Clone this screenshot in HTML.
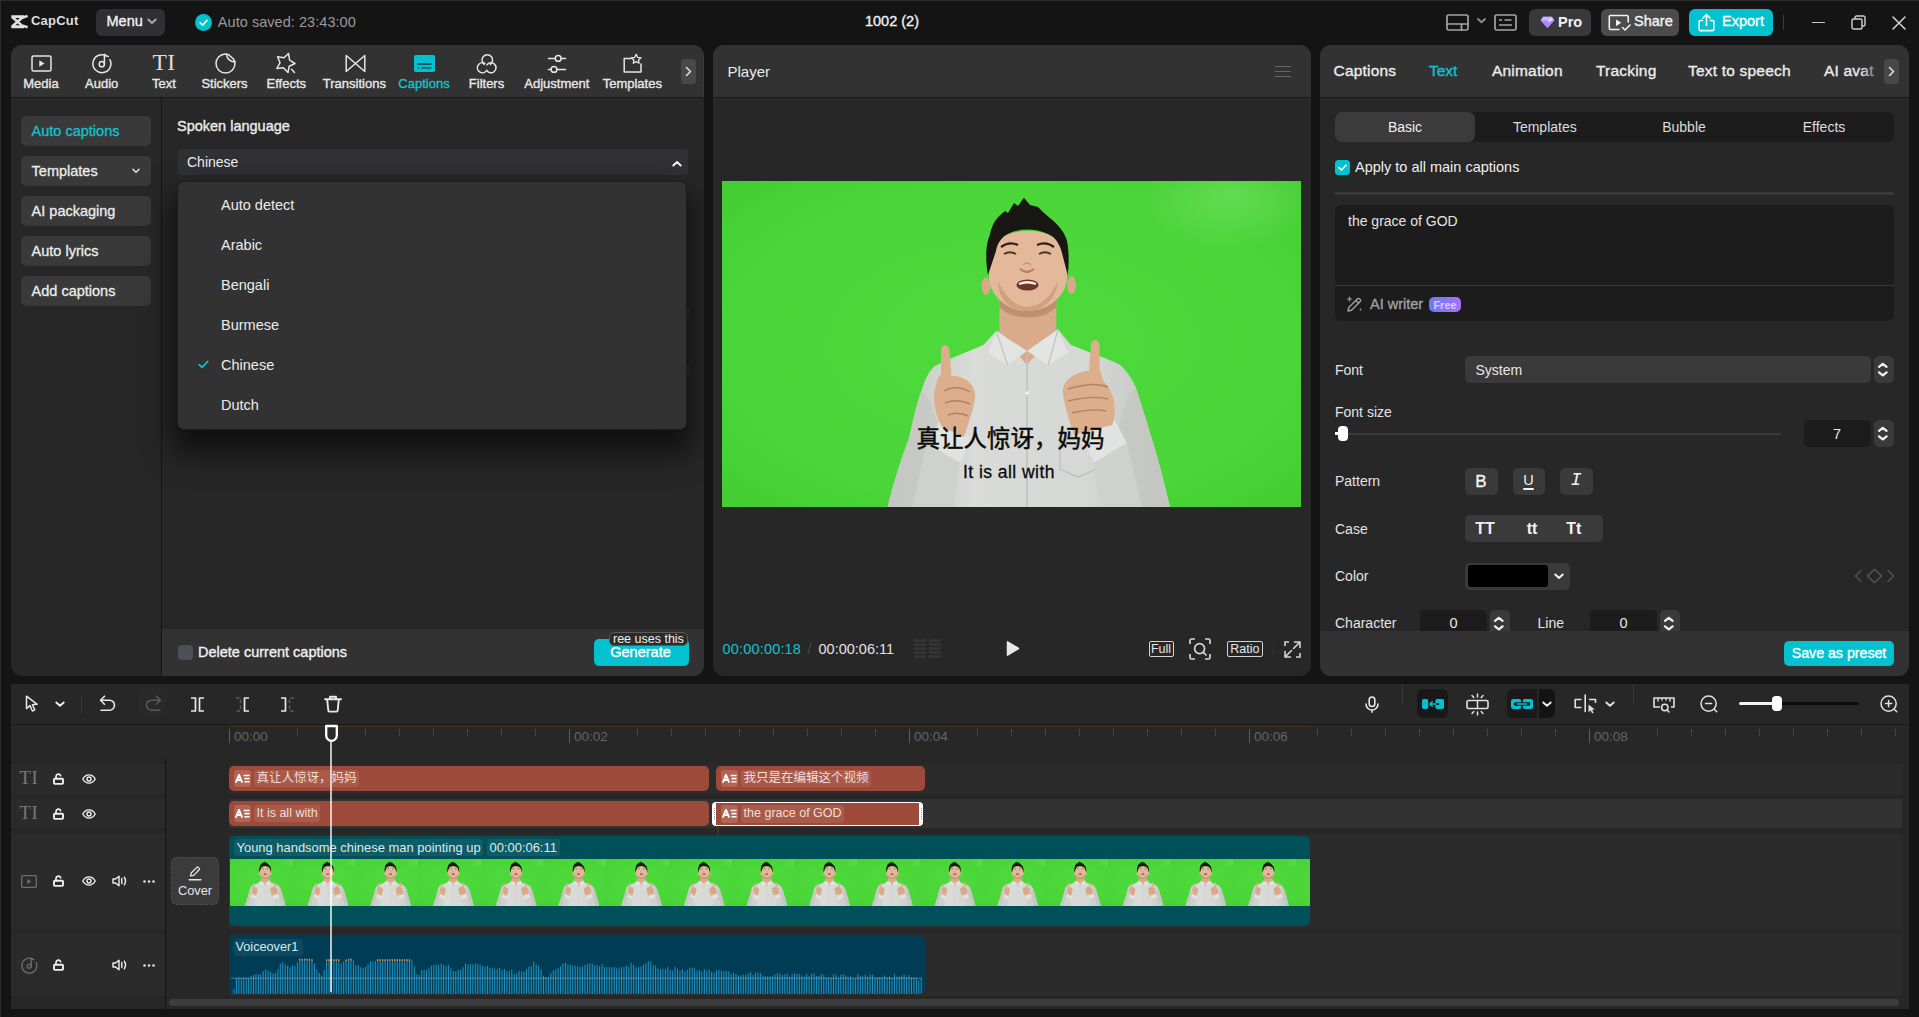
<!DOCTYPE html>
<html lang="en">
<head>
<meta charset="utf-8">
<title>CapCut</title>
<style>
*{box-sizing:border-box;margin:0;padding:0}
html,body{width:1919px;height:1017px;overflow:hidden;background:#141414}
body{position:relative;font-family:"Liberation Sans","Noto Sans CJK SC",sans-serif;color:#f0f0f0;font-size:14px;-webkit-font-smoothing:antialiased}
.abs{position:absolute}
.panel{position:absolute;background:#272727;border-radius:11px;overflow:hidden}
.phead{position:absolute;left:0;top:0;right:0;height:53px !important;background:#323232;border-bottom:1px solid #191919}
.m{-webkit-text-stroke:0.35px currentColor}
.t{position:absolute;white-space:nowrap;line-height:1}
.c{transform:translateX(-50%)}
svg{position:absolute;overflow:visible}
svg svg{overflow:hidden}
.ic{fill:none;stroke:#e6e6e6;stroke-width:1.5;stroke-linecap:round;stroke-linejoin:round}
.cy{color:#12c2cf !important}
.btn{position:absolute;border-radius:5px}
.sidebtn{position:absolute;left:10px;width:130px;height:30px;border-radius:5px;background:#393939;font-size:14.5px;line-height:30px;padding-left:10.600px;-webkit-text-stroke:0.3px currentColor;color:#ececec}
.dd{position:absolute;left:43px;font-size:14.5px;line-height:1;color:#ececec;white-space:nowrap}
.lab{position:absolute;font-size:14px;line-height:1;color:#e4e4e4;white-space:nowrap}
.step{position:absolute;width:20px;height:27px;background:#3a3a3a;border-radius:5px}
.row{position:absolute;left:0;right:7px;background:#2a2a2a}
.clip{position:absolute;background:#9d4a3a;border-radius:5px;height:25px}
.clip .tag{position:absolute;left:5px;top:3.800px;height:17.500px;width:17px;background:#b26555;border-radius:3px}
.clip .nm{position:absolute;left:25px;top:3.800px;height:17.500px;padding:0 2.500px;background:#a85b4b;border-radius:3px;font-size:12.5px;line-height:17.500px;color:#f3ded9;white-space:nowrap}
.tk{position:absolute;width:1.5px;background:#4a4a4a;top:46px;height:6px}
.tkM{position:absolute;width:2px;background:#666;top:45px;height:14px}
.tl{position:absolute;top:46px;font-size:13px;color:#707070;line-height:1}
</style>
</head>
<body>
<!-- window frame -->
<div class="abs" style="left:0;top:0;width:1919px;height:1px;background:#2b2b2b"></div>
<div class="abs" style="left:0;top:0;width:1px;height:1017px;background:#2b2b2b"></div>

<!-- TOP BAR -->
<svg style="left:11px;top:14.700px" width="17" height="13.400" viewBox="0 0 17 13.400"><path d="M0.300 0.200H13.200V3.100H0.300ZM0.300 10.300H13V13.200H0.300Z" fill="#e2e2e2"/><path d="M1.400 2.200L10.800 10.400L16.600 12.200M1.400 11.200L10.800 3L16.600 0.900" stroke="#e2e2e2" stroke-width="2.500" fill="none" stroke-linejoin="round"/></svg>
<div class="t" style="left:31px;top:14px;font-size:13px;font-weight:bold;color:#dedede;letter-spacing:0.2px">CapCut</div>

<div class="btn" style="left:96px;top:9px;width:69px;height:27px;background:#2f2f34;border-radius:6px"></div>
<div class="t m" style="left:106.5px;top:14px;font-size:14.5px;color:#f4f4f4">Menu</div>
<svg style="left:147px;top:18px" width="10" height="7" viewBox="0 0 10 7"><path d="M1.2 1.5L5 5L8.8 1.5" fill="none" stroke="#a8a8a8" stroke-width="1.9" stroke-linecap="round" stroke-linejoin="round"/></svg>

<svg style="left:195.200px;top:14px" width="17" height="17" viewBox="0 0 16 16"><circle cx="8" cy="8" r="8" fill="#03c1ce"/><path d="M4.8 8.2L7.2 10.5L11.3 6" fill="none" stroke="#fff" stroke-width="1.5" stroke-linecap="round" stroke-linejoin="round"/></svg>
<div class="t" style="left:217.800px;top:14.800px;font-size:14.5px;letter-spacing:0.050px;color:#9a9a9a">Auto saved: 23:43:00</div>

<div class="t c m" style="left:892px;top:14px;font-size:14.5px;color:#f2f2f2">1002 (2)</div>

<!-- layout icon -->
<svg style="left:1446px;top:14px" width="23" height="17" viewBox="0 0 23 17"><rect x="1" y="1" width="21" height="15" rx="1.5" class="ic" style="stroke:#a4a4a4;stroke-width:1.7"/><path d="M1 10H22M15.5 10V16" class="ic" style="stroke:#a4a4a4;stroke-width:1.7"/></svg>
<svg style="left:1477px;top:18px" width="9" height="6" viewBox="0 0 9 6"><path d="M1 1L4.5 4.2L8 1" fill="none" stroke="#8e8e8e" stroke-width="1.9" stroke-linecap="round" stroke-linejoin="round"/></svg>
<svg style="left:1494px;top:14px" width="23" height="17" viewBox="0 0 23 17"><rect x="1" y="1" width="21" height="15" rx="1.5" class="ic" style="stroke:#a4a4a4;stroke-width:1.7"/><path d="M5 6H8M10.5 6H17.5M5 11H18" class="ic" style="stroke:#a4a4a4;stroke-width:1.7;stroke-linecap:butt"/></svg>

<!-- Pro -->
<div class="btn" style="left:1529px;top:9px;width:62px;height:27px;background:#39393b;border-radius:6px"></div>
<svg style="left:1540px;top:16px" width="15" height="13" viewBox="0 0 15 13"><path d="M3.2 0.8H11.8L14.4 4.4L7.5 12.2L0.6 4.4Z" fill="#a98bff"/><path d="M3.2 0.8H11.8L14.4 4.4H0.6Z" fill="#c9b6ff"/><path d="M9 5.2L11.5 3.2" stroke="#fff" stroke-width="1.4" stroke-linecap="round"/></svg>
<div class="t" style="left:1558px;top:14.5px;font-size:14.5px;font-weight:bold;color:#f4f4f4">Pro</div>

<!-- Share -->
<div class="btn" style="left:1601px;top:9px;width:78px;height:27px;background:#4b4b4b;border-radius:6px"></div>
<svg style="left:1608px;top:14px" width="24" height="18" viewBox="0 0 24 18"><path d="M11 15.5H2.5a1.2 1.2 0 0 1-1.2-1.2V2.7a1.2 1.2 0 0 1 1.2-1.2h16.5a1.2 1.2 0 0 1 1.2 1.2V8" class="ic" style="stroke:#f2f2f2;stroke-width:1.6"/><path d="M8.500 6.200V11.400L12.500 8.800Z" fill="#f2f2f2" stroke="#f2f2f2" stroke-width="1" stroke-linejoin="round"/><path d="M14.5 13.5L17 16L22 11" class="ic" style="stroke:#f2f2f2;stroke-width:1.6"/></svg>
<div class="t m" style="left:1634px;top:14px;font-size:14.5px;color:#f4f4f4">Share</div>

<!-- Export -->
<div class="btn" style="left:1689px;top:9px;width:84px;height:27px;background:#03c1ce;border-radius:6px"></div>
<svg style="left:1698px;top:13px" width="17" height="19" viewBox="0 0 17 19"><path d="M4.5 7.5H2.2a1 1 0 0 0-1 1V16.6a1 1 0 0 0 1 1H14.8a1 1 0 0 0 1-1V8.5a1 1 0 0 0-1-1H12.5" class="ic" style="stroke:#fff;stroke-width:1.6"/><path d="M8.5 12.5V1.8M5 5L8.5 1.5L12 5" class="ic" style="stroke:#fff;stroke-width:1.6"/></svg>
<div class="t m" style="left:1722px;top:14px;font-size:14.5px;color:#fff">Export</div>

<div class="abs" style="left:1783px;top:15px;width:1px;height:15px;background:#3c3c3c"></div>
<!-- window controls -->
<div class="abs" style="left:1812px;top:22px;width:13px;height:1px;background:#c8c8c8"></div>
<svg style="left:1851px;top:15px" width="15" height="15" viewBox="0 0 15 15"><rect x="1" y="4" width="10" height="10" rx="1.5" fill="none" stroke="#d0d0d0" stroke-width="1.4"/><path d="M4 4V2.5a1.5 1.5 0 0 1 1.5-1.5H12.5a1.5 1.5 0 0 1 1.5 1.5V9.5a1.5 1.5 0 0 1-1.5 1.5H11" fill="none" stroke="#d0d0d0" stroke-width="1.4"/></svg>
<svg style="left:1892px;top:16px" width="14" height="14" viewBox="0 0 14 14"><path d="M1 1L13 13M13 1L1 13" stroke="#d6d6d6" stroke-width="1.5" stroke-linecap="round"/></svg>
<!-- LEFT PANEL -->
<div class="panel" style="left:11px;top:45px;width:693px;height:631px">
  <div class="phead" style="height:52px"></div>
  <!-- tab icons (coords relative to panel: subtract 11,45) -->
  <!-- Media -->
  <svg style="left:20px;top:10px" width="21" height="17" viewBox="0 0 21 17"><rect x="1" y="1" width="19" height="15" rx="1.5" class="ic"/><path d="M8.3 5.3V11.7L13.5 8.5Z" fill="#e6e6e6"/></svg>
  <div class="t c m" style="left:30px;top:32px;font-size:13px;color:#e8e8e8">Media</div>
  <!-- Audio -->
  <svg style="left:81px;top:8px" width="20" height="21" viewBox="0 0 20 21"><path d="M13.8 2.6A9 9 0 1 0 18 6.8" class="ic"/><circle cx="9.8" cy="11.2" r="2.6" class="ic"/><path d="M12.4 11.2V1.2C13.4 2.6 14.8 3.2 16.3 3.4" class="ic"/></svg>
  <div class="t c m" style="left:90.7px;top:32px;font-size:13px;color:#e8e8e8">Audio</div>
  <!-- Text -->
  <div class="t c" style="left:153px;top:6px;font-size:23.5px;font-family:'Liberation Serif',serif;color:#dedede;letter-spacing:0.5px">TI</div>
  <div class="t c m" style="left:153px;top:32px;font-size:13px;color:#e8e8e8">Text</div>
  <!-- Stickers -->
  <svg style="left:204px;top:8px" width="21" height="21" viewBox="0 0 21 21"><path d="M10.5 1A9.5 9.5 0 1 0 20 10.5Q20 8 18.5 6L13.5 1.6Q12 1 10.5 1Z" class="ic"/><path d="M11.5 1.2C12 5.5 14.5 8.5 19.8 9" class="ic"/></svg>
  <div class="t c m" style="left:213.5px;top:32px;font-size:13px;color:#e8e8e8">Stickers</div>
  <!-- Effects -->
  <svg style="left:264px;top:7px" width="22" height="23" viewBox="0 0 22 23"><path d="M13.5 1.5L14.6 8.2L20 11.5L14.2 14.2L13 20.5L8.3 15.8L1.8 16.5L5 10.8L2.6 4.8L9 5.8Z" class="ic"/><path d="M16.5 17.2L19.5 20.5" class="ic"/></svg>
  <div class="t c m" style="left:275.3px;top:32px;font-size:13px;color:#e8e8e8">Effects</div>
  <!-- Transitions -->
  <svg style="left:334px;top:9px" width="21" height="19" viewBox="0 0 21 19"><path d="M1.2 1.5V17.5L19.8 1.5V17.5Z" class="ic"/></svg>
  <div class="t c m" style="left:343.4px;top:32px;font-size:13px;color:#e8e8e8">Transitions</div>
  <!-- Captions (active) -->
  <svg style="left:402.5px;top:10px" width="21" height="17" viewBox="0 0 21 17"><rect x="0" y="0" width="21" height="17" rx="1.8" fill="#03c1ce"/><path d="M3.5 9H17.5M3.5 12.8H5.2M7.5 12.8H17.5" stroke="#323232" stroke-width="1.3"/></svg>
  <div class="t c m cy" style="left:413px;top:32px;font-size:13px">Captions</div>
  <!-- Filters -->
  <svg style="left:465px;top:9px" width="21" height="20" viewBox="0 0 21 20"><path d="M8.260 10.340A5.300 5.300 0 1 1 14.340 10.340" class="ic"/><path d="M8.900 9.470A5 5 0 1 0 10.500 16.670" class="ic"/><path d="M10.900 10.930A5 5 0 1 1 10.670 16.300" class="ic"/></svg>
  <div class="t c m" style="left:475.5px;top:32px;font-size:13px;color:#e8e8e8">Filters</div>
  <!-- Adjustment -->
  <svg style="left:536px;top:8px" width="20" height="21" viewBox="0 0 20 21"><path d="M1.5 5.4H8.3M14.2 5.4H18.500M1.500 16.400H4M10 16.400H18.500" class="ic"/><circle cx="11.2" cy="5.4" r="2.9" class="ic"/><circle cx="7" cy="16.400" r="2.9" class="ic"/></svg>
  <div class="t c m" style="left:545.8px;top:32px;font-size:13px;color:#e8e8e8">Adjustment</div>
  <!-- Templates -->
  <svg style="left:612px;top:7px" width="21" height="22" viewBox="0 0 21 22"><path d="M8 6.500H1.200V20H18V12" class="ic"/><path d="M13 2L14.400 5L17.700 5.400L15.300 7.600L15.900 10.900L13 9.300L10.100 10.900L10.700 7.600L8.300 5.400L11.600 5Z" class="ic" style="stroke-width:1.3" transform="translate(0.2,0.3)"/></svg>
  <div class="t c m" style="left:621.3px;top:32px;font-size:13px;color:#e8e8e8">Templates</div>
  <!-- arrow -->
  <div class="btn" style="left:670px;top:14px;width:15px;height:25px;background:#484848;border-radius:4px"></div>
  <svg style="left:674px;top:21px" width="7" height="11" viewBox="0 0 7 11"><path d="M1.5 1.5L5.5 5.5L1.5 9.5" fill="none" stroke="#e0e0e0" stroke-width="1.6" stroke-linecap="round" stroke-linejoin="round"/></svg>
  <div class="abs" style="left:692px;top:12px;width:0;height:40px;border-left:1px dashed #39424d"></div>

  <!-- sidebar -->
  <div class="abs" style="left:150px;top:53px;width:1px;height:578px;background:#151515"></div>
  <div class="sidebtn cy" style="top:71px">Auto captions</div>
  <div class="sidebtn" style="top:111px">Templates</div>
  <svg style="left:121px;top:123px" width="8" height="6" viewBox="0 0 8 6"><path d="M1 1.2L4 4.2L7 1.2" fill="none" stroke="#e0e0e0" stroke-width="1.5" stroke-linecap="round" stroke-linejoin="round"/></svg>
  <div class="sidebtn" style="top:151px">AI packaging</div>
  <div class="sidebtn" style="top:191px">Auto lyrics</div>
  <div class="sidebtn" style="top:231px">Add captions</div>

  <!-- content -->
  <div class="t m" style="left:166px;top:73.600px;font-size:14.5px;color:#ececec">Spoken language</div>
  <div class="abs" style="left:166.5px;top:104px;width:510px;height:25.500px;background:#303035;border-radius:4px"></div>
  <div class="t" style="left:176px;top:110px;font-size:14px;color:#ececec">Chinese</div>
  <svg style="left:661px;top:114.500px" width="10" height="7" viewBox="0 0 10 7"><path d="M1.3 5.5L5 2L8.7 5.5" fill="none" stroke="#f4f4f4" stroke-width="2" stroke-linecap="round" stroke-linejoin="round"/></svg>
  <!-- peeking things behind dropdown -->
  <div class="abs" style="left:675px;top:262px;width:4px;height:12px;border-radius:0 4px 4px 0;background:#333"></div>
  <div class="abs" style="left:675px;top:319px;width:4px;height:12px;border-radius:0 4px 4px 0;background:#333"></div>
  <!-- dropdown -->
  <div class="abs" style="left:166px;top:136px;width:509.5px;height:248.500px;background:#323232;border-radius:7px;border:1px solid #1d1d1d;box-shadow:0 18px 30px 6px rgba(0,0,0,0.6)">
    <div class="dd" style="top:15.5px">Auto detect</div>
    <div class="dd" style="top:55.5px">Arabic</div>
    <div class="dd" style="top:95.5px">Bengali</div>
    <div class="dd" style="top:135.5px">Burmese</div>
    <div class="dd" style="top:175.5px">Chinese</div>
    <div class="dd" style="top:215.5px">Dutch</div>
    <svg style="left:20px;top:178px" width="11" height="9" viewBox="0 0 11 9"><path d="M1.2 4.6L4 7.4L9.8 1.4" fill="none" stroke="#03c1ce" stroke-width="1.8" stroke-linecap="round" stroke-linejoin="round"/></svg>
  </div>

  <!-- footer -->
  <div class="abs" style="left:151px;top:584px;width:542px;height:47px;background:#323232"></div>
  <div class="abs" style="left:167px;top:600px;width:15px;height:15px;border-radius:4px;background:#4e4e56"></div>
  <div class="t m" style="left:187px;top:600px;font-size:14.5px;color:#f0f0f0">Delete current captions</div>
  <div class="btn" style="left:583px;top:594px;width:95px;height:27px;background:#03c1ce;border-radius:5px"></div>
  <div class="t c m" style="left:629.5px;top:599.5px;font-size:14.5px;color:#fff">Generate</div>
  <div class="abs" style="left:598px;top:586.5px;width:79px;height:14.5px;background:#2b2b2b;border:1px solid #5a5a5a;border-radius:5px"></div>
  <div class="t" style="left:602px;top:587.5px;font-size:12.5px;color:#f0f0f0">ree uses this</div>
</div>
<!-- PLAYER PANEL -->
<div class="panel" style="left:713px;top:45px;width:598px;height:631px;background:#272727">
  <div class="phead" style="height:52px"></div>
  <div class="t" style="left:14.5px;top:18.500px;font-size:15px;color:#ececec">Player</div>
  <div class="abs" style="left:562px;top:20.5px;width:16px;height:1.5px;background:#666;box-shadow:0 5px 0 #666,0 10px 0 #666"></div>

  <!-- video -->
  <svg style="left:9px;top:136px" width="579" height="326" viewBox="0 0 579 326">
    <defs>
      <radialGradient id="gbg" cx="0.5" cy="0.5" r="0.75">
        <stop offset="0" stop-color="#4fda3c"/><stop offset="0.65" stop-color="#4ad538"/><stop offset="1" stop-color="#41cb30"/>
      </radialGradient>
      <radialGradient id="ghl" cx="0.880" cy="0.050" r="0.160">
        <stop offset="0" stop-color="#7be36a" stop-opacity="0.550"/><stop offset="1" stop-color="#7be36a" stop-opacity="0"/>
      </radialGradient>
      <linearGradient id="shirt" x1="0" y1="0" x2="1" y2="0">
        <stop offset="0" stop-color="#c6c8c4"/><stop offset="0.3" stop-color="#d9dbd8"/><stop offset="0.7" stop-color="#d6d8d5"/><stop offset="1" stop-color="#c2c4c0"/>
      </linearGradient>
      <symbol id="man" viewBox="0 0 579 326" preserveAspectRatio="xMidYMid slice">
        <rect width="579" height="326" fill="url(#gbg)"/>
        <rect width="579" height="326" fill="url(#ghl)"/>
        <!-- shirt -->
        <path d="M165.500 326C172 300 180 275 186.700 258C192 235 196 218 199.600 209.500C203 198 207 190 212.600 185.200C228 177 246 171 261.300 164L274.300 150L305 160L336 148.300L348.900 164C366 171 384 177 397.600 183.500C405 190 410 198 413.800 206.300C420 225 426 245 430 258.200C437 280 443 305 448 326Z" fill="url(#shirt)"/>
        <!-- arm shading -->
        <path d="M199.600 209.500C215 225 222 260 226 326H165.500C172 300 180 275 186.700 258C192 235 196 218 199.600 209.500Z" fill="#c4c6c2" opacity="0.7"/>
        <path d="M413.800 206.300C398 225 392 260 388 326H448C443 305 437 280 430 258.200C426 245 420 225 413.800 206.300Z" fill="#c4c6c2" opacity="0.7"/>
        <!-- neck -->
        <path d="M277.500 108V152L305 184L334.300 150V108Z" fill="#d9ab8b"/>
        <path d="M277.500 126C290 140 322 140 334.300 126V110H277.500Z" fill="#c08e70"/>
        <!-- collar -->
        <path d="M274.300 150L266 172L285.600 184L305 170Z" fill="#e3e5e2"/>
        <path d="M336 148.300L346 172L326.200 184L305 170Z" fill="#e3e5e2"/>
        <path d="M274.300 150L285.600 184M336 148.300L326.200 184" stroke="#b9bbb7" stroke-width="1"/>
        <path d="M305 172V326" stroke="#bfc1bd" stroke-width="1.5"/>
        <circle cx="305" cy="212" r="2" fill="#eeeeec"/><circle cx="305" cy="252" r="2" fill="#eeeeec"/><circle cx="305" cy="292" r="2" fill="#eeeeec"/>
        <!-- pocket -->
        <path d="M338 258H374V288L356 296L338 288Z" fill="none" stroke="#bcbeba" stroke-width="1.2"/>
        <!-- ears -->
        <ellipse cx="264" cy="105" rx="4.500" ry="9" fill="#d8a888"/>
        <ellipse cx="349.500" cy="104" rx="4.500" ry="9" fill="#d8a888"/>
        <!-- face -->
        <path d="M267 74C268 44 340 40 345 74V98C343 116 326 130 305 130C286 130 269 116 267 98Z" fill="#e4b99b"/>
        <path d="M276 100C284 118 296 126 305 126C316 126 328 118 336 100C334 118 322 130 305 130C288 130 276 118 276 100Z" fill="#d1a080"/>
        <!-- hair -->
        <path d="M266 94C263 78 264 62 267.800 54C270 44 273 39 277.500 34.700L283 30L286 32L292 22L296 25L301.900 16.800L308 24L316 26L322 32L332.700 41C340 48 345 56 345.700 63.900C347 74 347 84 345.700 94L341 76C338 62 333 56 326 53C312 47 296 47 284 54C278 58 275 64 274 70Z" fill="#191714"/>
        <!-- brows / eyes / nose / mouth -->
        <path d="M279 66Q287 60 296 64M315 64Q324 60 332 66" stroke="#2e2018" stroke-width="2.200" fill="none"/>
        <path d="M282 73Q288 69.500 294 73M317 73Q323 69.500 329 73" stroke="#4a3428" stroke-width="1.800" fill="none"/>
        <path d="M298 88Q305 94 312 88" stroke="#b57f60" stroke-width="2.200" fill="none"/>
        <path d="M301 84Q305 80 309 84" stroke="#c99474" stroke-width="1.500" fill="none"/>
        <ellipse cx="305.500" cy="104" rx="11" ry="5.500" fill="#6e352b"/>
        <path d="M296.500 102Q305.500 98 314.500 102L313.500 104Q305.500 101 297.500 104Z" fill="#f4efe8"/>
        <!-- cuffs -->
        <path d="M205 262L238 282L250 258L218 240Z" fill="#e1e3e0"/>
        <path d="M405 262L372 282L360 256L392 238Z" fill="#e1e3e0"/>
        <path d="M205 262L238 282L232 326H190Z" fill="#cfd1cd"/>
        <path d="M405 262L372 282L378 326H420Z" fill="#cfd1cd"/>
        <!-- hands -->
        <path d="M220 246C212 232 210 214 214 204C215 198 217 195 219 193.700L219 170C219 162 227.500 162 227.500 170L229.500 195C240 194 253 202 253.200 214C252 230 246 242 242 256Z" fill="#dcae8c"/>
        <path d="M390 244C398 230 383 206 381.300 200C380 194 378 190 377.500 187.200L377.500 165C377.500 157 369 157 369 165L367 190C356 190 341 198 340.800 210C342 226 348 240 352 254Z" fill="#dcae8c"/>
        <path d="M381 200C392 210 396 228 390 244" fill="#dcae8c"/>
        <path d="M222 210Q234 203 248 211M223 222Q235 217 248 223M226 234Q236 230 246 235" stroke="#b58060" stroke-width="1.400" fill="none"/>
        <path d="M386 206Q372 200 346 208M386 218Q372 214 346 220M384 230Q372 227 350 232" stroke="#b58060" stroke-width="1.400" fill="none"/>
      </symbol>
    </defs>
    <use href="#man" x="0" y="0" width="579" height="326"/>
    <text x="288.5" y="266" text-anchor="middle" font-size="23.5" font-family="'Liberation Sans','Noto Sans CJK SC',sans-serif" fill="#0a0a0a" stroke="#0a0a0a" stroke-width="0.5">真让人惊讶，妈妈</text>
    <text x="287" y="297" text-anchor="middle" font-size="17.5" letter-spacing="0.45" font-family="'Liberation Sans',sans-serif" fill="#0a0a0a" stroke="#0a0a0a" stroke-width="0.3">It is all with</text>
  </svg>

  <!-- controls -->
  <div class="t cy" style="left:9.5px;top:597px;font-size:14.5px;letter-spacing:0.180px">00:00:00:18</div>
  <div class="t" style="left:94.500px;top:597px;font-size:14.5px;color:#484848">/</div>
  <div class="t" style="left:105.5px;top:597px;font-size:14.5px;color:#e2e2e2">00:00:06:11</div>
  <svg style="left:200px;top:594px" width="29" height="20" viewBox="0 0 29 20"><path d="M1 1.5H13M1 5.5H13M1 9.5H13M1 13.5H13M1 17.5H13M16 1.5H28M16 5.5H28M16 9.5H28M16 13.5H28M16 17.5H28" stroke="#373737" stroke-width="2.4"/></svg>
  <svg style="left:293px;top:595px" width="14" height="17" viewBox="0 0 14 17"><path d="M1.5 1.8V15.2L12.5 8.5Z" fill="#e8e8e8" stroke="#e8e8e8" stroke-width="1.5" stroke-linejoin="round"/></svg>
  <div class="abs" style="left:435.5px;top:596px;width:25px;height:15.5px;border:1.5px solid #d4d4d4;border-radius:2px"></div>
  <div class="t c" style="left:448px;top:597.5px;font-size:12.5px;color:#e6e6e6">Full</div>
  <svg style="left:476px;top:593px" width="22" height="22" viewBox="0 0 22 22"><path d="M1 6V2.5A1.5 1.5 0 0 1 2.5 1H6M16 1H19.5A1.5 1.5 0 0 1 21 2.5V6M21 16V19.500A1.5 1.5 0 0 1 19.5 21H16M6 21H2.5A1.500 1.5 0 0 1 1 19.5V16" class="ic" style="stroke:#d4d4d4;stroke-width:1.7;stroke-linecap:butt"/><circle cx="10.6" cy="10.6" r="5" class="ic" style="stroke:#d4d4d4;stroke-width:1.7"/><path d="M14.3 14.3L17 17" class="ic" style="stroke:#d4d4d4;stroke-width:1.7"/></svg>
  <div class="abs" style="left:514px;top:596px;width:35.500px;height:15.5px;border:1.5px solid #d4d4d4;border-radius:2px"></div>
  <div class="t c" style="left:531.8px;top:597.5px;font-size:12.5px;color:#e6e6e6">Ratio</div>
  <div class="abs" style="left:559.5px;top:599px;width:1px;height:10px;background:#33333a"></div>
  <svg style="left:571px;top:596px" width="17" height="17" viewBox="0 0 17 17"><path d="M1 5V1H5M12 16H16V12" class="ic" style="stroke:#d4d4d4;stroke-width:1.6;stroke-linecap:butt;stroke-linejoin:miter"/><path d="M9.5 7.5L16 1M10.500 1H16V6.5M7.5 9.5L1 16M1 10.5V16H6.5" class="ic" style="stroke:#d4d4d4;stroke-width:1.6"/></svg>
</div>
<!-- RIGHT PANEL (origin 1320,45) -->
<div class="panel" style="left:1320px;top:45px;width:589px;height:631px;background:#272727">
  <div class="phead" style="height:52px"></div>
  <div class="t m" style="left:13.500px;top:18px;font-size:15.5px;letter-spacing:0.2px;color:#ececec">Captions</div>
  <div class="t m cy" style="left:109px;top:18px;font-size:15.5px">Text</div>
  <div class="t m" style="left:172px;top:18px;font-size:15.5px;letter-spacing:0.2px;color:#ececec">Animation</div>
  <div class="t m" style="left:276px;top:18px;font-size:15.5px;letter-spacing:0.2px;color:#ececec">Tracking</div>
  <div class="t m" style="left:368px;top:18px;font-size:15.5px;letter-spacing:0.2px;color:#ececec">Text to speech</div>
  <div class="t m" style="left:504px;top:18px;font-size:15.5px;letter-spacing:0.2px;color:#ececec">AI avat</div>
  <div class="abs" style="left:540px;top:10px;width:24px;height:32px;background:linear-gradient(90deg,rgba(50,50,50,0),#323232)"></div>
  <div class="btn" style="left:564px;top:14px;width:15px;height:25px;background:#484848;border-radius:4px"></div>
  <svg style="left:568px;top:21px" width="7" height="11" viewBox="0 0 7 11"><path d="M1.5 1.5L5.500 5.5L1.5 9.5" fill="none" stroke="#e0e0e0" stroke-width="1.6" stroke-linecap="round" stroke-linejoin="round"/></svg>

  <!-- segmented -->
  <div class="abs" style="left:15px;top:67px;width:559px;height:30px;background:#1c1c1c;border-radius:7px"></div>
  <div class="abs" style="left:15px;top:67px;width:140px;height:30px;background:#3b3b3b;border-radius:7px"></div>
  <div class="t c" style="left:85px;top:75px;font-size:14px;color:#f0f0f0">Basic</div>
  <div class="t c" style="left:224.8px;top:75px;font-size:14px;color:#dcdcdc">Templates</div>
  <div class="t c" style="left:364px;top:75px;font-size:14px;color:#dcdcdc">Bubble</div>
  <div class="t c" style="left:504px;top:75px;font-size:14px;color:#dcdcdc">Effects</div>

  <!-- checkbox -->
  <svg style="left:15px;top:115px" width="15" height="15" viewBox="0 0 15 15"><rect width="15" height="15" rx="3.5" fill="#03c1ce"/><path d="M4 7.6L6.500 10L11 5.200" fill="none" stroke="#fff" stroke-width="1.6" stroke-linecap="round" stroke-linejoin="round"/></svg>
  <div class="t" style="left:35px;top:115px;font-size:14.5px;color:#f0f0f0">Apply to all main captions</div>
  <div class="abs" style="left:15px;top:147px;width:559px;height:2.5px;background:#393939"></div>

  <!-- textarea -->
  <div class="abs" style="left:15px;top:160px;width:559px;height:115.500px;background:#1c1c1c;border-radius:6px"></div>
  <div class="t" style="left:28px;top:168.5px;font-size:14px;color:#e4e4e4">the grace of GOD</div>
  <div class="abs" style="left:15px;top:240.200px;width:559px;height:1px;background:#383838"></div>
    <svg style="left:26px;top:251px" width="17" height="17" viewBox="0 0 17 17"><path d="M2 15L2.800 11.500L11.500 2.800A1.400 1.400 0 0 1 13.500 2.800L14.200 3.500A1.400 1.400 0 0 1 14.200 5.500L5.500 14.200Z" class="ic" style="stroke:#a0a0a0;stroke-width:1.4"/><path d="M10 4.500L12.500 7" class="ic" style="stroke:#a0a0a0;stroke-width:1.4"/><path d="M3.500 1V5M1.500 3H5.500" class="ic" style="stroke:#a0a0a0;stroke-width:1.2"/><circle cx="14.500" cy="13.500" r="0.900" fill="#a0a0a0"/></svg>
  <div class="t m" style="left:50px;top:251.500px;font-size:14.500px;color:#a0a0a0">AI writer</div>
  <div class="abs" style="left:109px;top:252px;width:32px;height:15px;background:linear-gradient(90deg,#6b7af6,#a871f3);border-radius:5px"></div>
  <div class="t c" style="left:125px;top:254.500px;font-size:11px;font-weight:bold;color:#d9ceff">Free</div>

  <!-- Font -->
  <div class="lab" style="left:15px;top:317.500px">Font</div>
  <div class="abs" style="left:145px;top:311px;width:406px;height:27px;background:#3a3a3a;border-radius:5px"></div>
  <div class="t" style="left:155.500px;top:317.500px;font-size:14px;color:#e8e8e8">System</div>
  <div class="step" style="left:554px;top:311px"><svg style="left:0;top:0" width="20" height="27" viewBox="0 0 20 27"><path d="M5 10.900L8.800 7.900L12.600 10.900M5 16.300L8.800 19.300L12.600 16.300" fill="none" stroke="#f4f4f4" stroke-width="2.200" stroke-linecap="round" stroke-linejoin="round"/></svg></div>

  <!-- Font size -->
  <div class="lab" style="left:15px;top:359.500px">Font size</div>
  <div class="abs" style="left:15px;top:387.500px;width:446px;height:2px;background:#3a3a3a;border-radius:1px"></div>
  <div class="abs" style="left:17.500px;top:380.500px;width:10.500px;height:15.500px;background:#fff;border-radius:4px"></div>
  <div class="abs" style="left:15px;top:387px;width:4px;height:2.500px;background:#fff"></div>
  <div class="abs" style="left:483.500px;top:375px;width:67.500px;height:27px;background:#1c1c1c;border-radius:5px"></div>
  <div class="t c" style="left:517px;top:381.500px;font-size:14.500px;color:#e8e8e8">7</div>
  <div class="step" style="left:554px;top:375px"><svg style="left:0;top:0" width="20" height="27" viewBox="0 0 20 27"><path d="M5 10.900L8.800 7.900L12.600 10.900M5 16.300L8.800 19.300L12.600 16.300" fill="none" stroke="#f4f4f4" stroke-width="2.200" stroke-linecap="round" stroke-linejoin="round"/></svg></div>

  <!-- Pattern -->
  <div class="lab" style="left:15px;top:429px">Pattern</div>
  <div class="abs" style="left:145px;top:422.500px;width:32.500px;height:27px;background:#3a3a3a;border-radius:5px"></div>
  <div class="abs" style="left:192.500px;top:422.500px;width:32.500px;height:27px;background:#3a3a3a;border-radius:5px"></div>
  <div class="abs" style="left:240px;top:422.500px;width:32.500px;height:27px;background:#3a3a3a;border-radius:5px"></div>
  <div class="t c m" style="left:161px;top:427.500px;font-size:17px;color:#f2f2f2">B</div>
  <div class="t c" style="left:208.500px;top:428px;font-size:14.500px;color:#f2f2f2;text-decoration:underline;text-underline-offset:2.500px;text-decoration-thickness:1.500px" >U</div>
  <div class="t c" style="left:256px;top:426.500px;font-size:18.500px;font-family:'Liberation Mono',monospace;font-style:italic;color:#f2f2f2">I</div>

  <!-- Case -->
  <div class="lab" style="left:15px;top:476.500px">Case</div>
  <div class="abs" style="left:145px;top:470px;width:137.500px;height:27px;background:#3a3a3a;border-radius:5px"></div>
  <div class="t c" style="left:165px;top:475.500px;font-size:16px;font-weight:bold;color:#f2f2f2">TT</div>
  <div class="t c" style="left:212px;top:475.500px;font-size:16px;font-weight:bold;color:#f2f2f2">tt</div>
  <div class="t c" style="left:253.700px;top:475.500px;font-size:16px;font-weight:bold;color:#f2f2f2">Tt</div>

  <!-- Color -->
  <div class="lab" style="left:15px;top:524px">Color</div>
  <div class="abs" style="left:145px;top:517.500px;width:105px;height:27px;background:#3a3a3a;border-radius:5px"></div>
  <div class="abs" style="left:147.500px;top:520px;width:80px;height:22px;background:#000;border-radius:3px"></div>
  <svg style="left:234px;top:527.500px" width="10" height="7" viewBox="0 0 10 7"><path d="M1.300 1.500L5 5L8.700 1.500" fill="none" stroke="#f4f4f4" stroke-width="2" stroke-linecap="round" stroke-linejoin="round"/></svg>
  <svg style="left:534px;top:523px" width="41" height="16" viewBox="0 0 41 16"><path d="M7 2.500L1.500 8L7 13.500M34 2.500L39.500 8L34 13.500" fill="none" stroke="#565656" stroke-width="1.400" stroke-linecap="round" stroke-linejoin="round"/><path d="M20.500 1.200L27.500 8L20.500 14.800L13.500 8Z" fill="none" stroke="#565656" stroke-width="1.400" stroke-linejoin="round"/></svg>

  <!-- Character / Line -->
  <div class="lab" style="left:15px;top:571px">Character</div>
  <div class="abs" style="left:100px;top:565px;width:67px;height:27px;background:#1c1c1c;border-radius:5px"></div>
  <div class="t c" style="left:133.500px;top:571px;font-size:14.500px;color:#e8e8e8">0</div>
  <div class="step" style="left:170px;top:565px"><svg style="left:0;top:0" width="20" height="27" viewBox="0 0 20 27"><path d="M5 10.900L8.800 7.900L12.600 10.900M5 16.300L8.800 19.300L12.600 16.300" fill="none" stroke="#f4f4f4" stroke-width="2.200" stroke-linecap="round" stroke-linejoin="round"/></svg></div>
  <div class="lab" style="left:217.500px;top:571px">Line</div>
  <div class="abs" style="left:270px;top:565px;width:67px;height:27px;background:#1c1c1c;border-radius:5px"></div>
  <div class="t c" style="left:303.500px;top:571px;font-size:14.500px;color:#e8e8e8">0</div>
  <div class="step" style="left:340px;top:565px"><svg style="left:0;top:0" width="20" height="27" viewBox="0 0 20 27"><path d="M5 10.900L8.800 7.900L12.600 10.900M5 16.300L8.800 19.300L12.600 16.300" fill="none" stroke="#f4f4f4" stroke-width="2.200" stroke-linecap="round" stroke-linejoin="round"/></svg></div>

  <!-- footer -->
  <div class="abs" style="left:0;top:585.500px;width:589px;height:46px;background:#323232"></div>
  <div class="btn" style="left:464px;top:596px;width:110px;height:25px;background:#03c1ce;border-radius:5px"></div>
  <div class="t c m" style="left:519px;top:600.500px;font-size:14.200px;color:#fff">Save as preset</div>
</div>
<!-- TIMELINE PANEL (origin 11,684) -->
<div class="panel" style="left:11px;top:684px;width:1898px;height:325px;background:#272727;border-radius:0">
<div class="abs" style="left:0;top:40px;width:1898px;height:1px;background:#1b1b1b"></div>
<svg style="left:13.5px;top:11px" width="14" height="18" viewBox="0 0 14 18"><path d="M1.5 1.2V13.6L5 10.6L7.4 16L9.8 14.9L7.4 9.700L12.200 9.300Z" class="ic" style="stroke:#e8e8e8;stroke-width:1.5"/></svg>
<svg style="left:44px;top:17px" width="10" height="7" viewBox="0 0 10 7"><path d="M1.300 1.500L5 4.800L8.700 1.500" fill="none" stroke="#f0f0f0" stroke-width="1.900" stroke-linecap="round" stroke-linejoin="round"/></svg>
<div class="abs" style="left:70px;top:10.5px;width:1px;height:19px;background:#3a3a3a"></div>
<svg style="left:88px;top:11px" width="17" height="17" viewBox="0 0 17 17"><path d="M5.500 1.200L1.500 5.200L5.500 9.200M1.800 5.200H10.500A5 5 0 0 1 10.500 15.200H2" class="ic" style="stroke:#e8e8e8;stroke-width:1.600"/></svg>
<div class="abs" style="left:127.5px;top:4px;width:27px;height:30px;background:#292929;border-radius:5px"></div>
<svg style="left:133.5px;top:11px" width="17" height="17" viewBox="0 0 17 17"><path d="M11.500 1.200L15.500 5.200L11.500 9.200M15.200 5.200H6.500A5 5 0 0 0 6.500 15.200H15" class="ic" style="stroke:#5a5a5a;stroke-width:1.600"/></svg>
<svg style="left:179px;top:12.5px" width="15" height="15" viewBox="0 0 15 15"><path d="M1 1H5.500V14H1M14 1H9.500V14H14" class="ic" style="stroke:#e8e8e8;stroke-width:1.700;stroke-linecap:butt;stroke-linejoin:round"/></svg>
<svg style="left:224px;top:12.5px" width="15" height="15" viewBox="0 0 15 15"><path d="M1 1H5.500V14H1" class="ic" style="stroke:#5e5e5e;stroke-width:1.500;stroke-dasharray:3.500 2.500;stroke-linecap:butt"/><path d="M14 1H9.500V14H14" class="ic" style="stroke:#e8e8e8;stroke-width:1.700;stroke-linecap:butt"/></svg>
<svg style="left:269px;top:12.5px" width="15" height="15" viewBox="0 0 15 15"><path d="M1 1H5.500V14H1" class="ic" style="stroke:#e8e8e8;stroke-width:1.700;stroke-linecap:butt"/><path d="M14 1H9.500V14H14" class="ic" style="stroke:#5e5e5e;stroke-width:1.500;stroke-dasharray:3.500 2.500;stroke-linecap:butt"/></svg>
<svg style="left:312.5px;top:11px" width="18" height="18" viewBox="0 0 18 18"><path d="M1 4.200H17M6 4V1.800H12V4M3.200 4.500L4.300 15.500A1.200 1.200 0 0 0 5.500 16.600H12.500A1.200 1.200 0 0 0 13.700 15.500L14.800 4.500" class="ic" style="stroke:#e8e8e8;stroke-width:1.900"/></svg>
<svg style="left:1353.5px;top:12px" width="14" height="17" viewBox="0 0 14 17"><rect x="4.200" y="1" width="5.600" height="9.500" rx="2.800" class="ic" style="stroke:#e8e8e8;stroke-width:1.600"/><path d="M1 8A6 6 0 0 0 13 8M7 14V16.200" class="ic" style="stroke:#e8e8e8;stroke-width:1.600"/></svg>
<div class="abs" style="left:1390.5px;top:0;width:1px;height:20px;background:#3a3a3a"></div>
<div class="abs" style="left:1406px;top:4.7px;width:30.500px;height:29.800px;background:#181818;border-radius:6px"></div>
<svg style="left:1410.5px;top:14.5px" width="22" height="10" viewBox="0 0 22 10"><rect x="0" y="0" width="6.200" height="10" rx="1.800" fill="#03c1ce"/><path d="M15.200 0H20.200A1.800 1.800 0 0 1 22 1.800V8.200A1.800 1.800 0 0 1 20.200 10H15.200A1.800 1.800 0 0 1 13.400 8.200V6H17V4H13.400V1.800A1.800 1.800 0 0 1 15.200 0Z" fill="#03c1ce"/><path d="M7.800 5H14M10.300 2.700L7.800 5L10.300 7.300" fill="none" stroke="#03c1ce" stroke-width="1.500" stroke-linecap="round" stroke-linejoin="round"/></svg>
<svg style="left:1455px;top:8.5px" width="23" height="23" viewBox="0 0 23 23"><rect x="1" y="7.500" width="21" height="8" rx="1.500" class="ic" style="stroke:#e0e0e0;stroke-width:1.600"/><path d="M11.500 7.500V15.500M11.500 1V4M11.500 19V22M6 2.500L7.800 4.500M17 2.500L15.200 4.500M6 20.500L7.800 18.500M17 20.500L15.200 18.500" class="ic" style="stroke:#e0e0e0;stroke-width:1.500"/></svg>
<div class="abs" style="left:1496px;top:4.7px;width:30px;height:29.800px;background:#1a1a1a;border-radius:6px 0 0 6px"></div>
<div class="abs" style="left:1527.5px;top:4.7px;width:16.500px;height:29.800px;background:#131313;border-radius:0 6px 6px 0"></div>
<svg style="left:1500px;top:14.5px" width="22" height="10" viewBox="0 0 22 10"><path d="M2 0H8.200A2 2 0 0 1 10.200 2V3.200H4.500A1.800 1.800 0 0 0 4.500 6.800H10.200V8A2 2 0 0 1 8.200 10H2A2 2 0 0 1 0 8V2A2 2 0 0 1 2 0ZM13.800 0H20A2 2 0 0 1 22 2V8A2 2 0 0 1 20 10H13.800A2 2 0 0 1 11.800 8V6.800H17.500A1.800 1.800 0 0 0 17.500 3.200H11.800V2A2 2 0 0 1 13.800 0Z" fill="#03c1ce"/><path d="M6.500 5H15.500" stroke="#03c1ce" stroke-width="1.600" stroke-linecap="round"/></svg>
<svg style="left:1531px;top:16.5px" width="10" height="7" viewBox="0 0 10 7"><path d="M1.300 1.500L5 4.800L8.700 1.500" fill="none" stroke="#f0f0f0" stroke-width="1.900" stroke-linecap="round" stroke-linejoin="round"/></svg>
<svg style="left:1562.5px;top:10px" width="23" height="20" viewBox="0 0 23 20"><path d="M7.500 5.500H1.200V13.500H7.500M15 5.500H21.500V9" class="ic" style="stroke:#e0e0e0;stroke-width:1.600;stroke-linecap:butt"/><path d="M11.200 1V17.500" class="ic" style="stroke:#e0e0e0;stroke-width:1.600"/><path d="M14.500 10.500V18.200L16.600 16.400L18.200 19.500L19.600 18.800L18.100 15.800L20.800 15.400Z" fill="#e0e0e0"/></svg>
<svg style="left:1594px;top:16.5px" width="10" height="7" viewBox="0 0 10 7"><path d="M1.300 1.500L5 4.800L8.700 1.500" fill="none" stroke="#e0e0e0" stroke-width="1.900" stroke-linecap="round" stroke-linejoin="round"/></svg>
<div class="abs" style="left:1621.8px;top:0;width:1px;height:20px;background:#3a3a3a"></div>
<svg style="left:1642px;top:12.5px" width="22" height="16" viewBox="0 0 22 16"><path d="M6.500 10H1V1H21V10H18.500" class="ic" style="stroke:#e0e0e0;stroke-width:1.600;stroke-linejoin:round"/><path d="M5 1V4.500M9 1V3.500M13 1V3.500M17 1V4.500" class="ic" style="stroke:#e0e0e0;stroke-width:1.400;stroke-linecap:butt"/><circle cx="11.800" cy="10.500" r="3.200" class="ic" style="stroke:#e0e0e0;stroke-width:1.500"/><path d="M14.200 13L16 15" class="ic" style="stroke:#e0e0e0;stroke-width:1.500"/></svg>
<svg style="left:1689px;top:11px" width="18" height="18" viewBox="0 0 18 18"><circle cx="8.600" cy="8.600" r="7.600" class="ic" style="stroke:#e0e0e0;stroke-width:1.500"/><path d="M5.500 8.600H11.700M14.200 14.200L16.800 16.800" class="ic" style="stroke:#e0e0e0;stroke-width:1.500"/></svg>
<div class="abs" style="left:1728px;top:18.3px;width:120px;height:3px;background:#0c0c0c;border-radius:2px"></div>
<div class="abs" style="left:1728px;top:18.3px;width:36px;height:3px;background:#f4f4f4;border-radius:2px"></div>
<div class="abs" style="left:1761px;top:11.7px;width:10px;height:15.500px;background:#fff;border-radius:4px"></div>
<svg style="left:1869px;top:11px" width="18" height="18" viewBox="0 0 18 18"><circle cx="8.600" cy="8.600" r="7.600" class="ic" style="stroke:#e0e0e0;stroke-width:1.500"/><path d="M5.500 8.600H11.700M8.600 5.500V11.700M14.200 14.200L16.800 16.800" class="ic" style="stroke:#e0e0e0;stroke-width:1.500"/></svg>
<div class="abs" style="left:218px;top:42.3px;width:1082px;height:1px;background:#3c3a14"></div>
<div class="abs" style="left:217.6px;top:45px;width:1.400px;height:13.500px;background:#5e5e5e"></div>
<div class="t" style="left:223.1px;top:45.5px;font-size:13.500px;color:#656565">00:00</div>
<div class="abs" style="left:285.5px;top:45px;width:1.600px;height:6.500px;background:#454545"></div>
<div class="abs" style="left:319.5px;top:45px;width:1.600px;height:6.500px;background:#454545"></div>
<div class="abs" style="left:353.5px;top:45px;width:1.600px;height:6.500px;background:#454545"></div>
<div class="abs" style="left:387.5px;top:45px;width:1.600px;height:6.500px;background:#454545"></div>
<div class="abs" style="left:421.5px;top:45px;width:1.600px;height:6.500px;background:#454545"></div>
<div class="abs" style="left:455.5px;top:45px;width:1.600px;height:6.500px;background:#454545"></div>
<div class="abs" style="left:489.5px;top:45px;width:1.600px;height:6.500px;background:#454545"></div>
<div class="abs" style="left:523.5px;top:45px;width:1.600px;height:6.500px;background:#454545"></div>
<div class="abs" style="left:557.6px;top:45px;width:1.400px;height:13.500px;background:#5e5e5e"></div>
<div class="t" style="left:563.1px;top:45.5px;font-size:13.500px;color:#656565">00:02</div>
<div class="abs" style="left:625.5px;top:45px;width:1.600px;height:6.500px;background:#454545"></div>
<div class="abs" style="left:659.5px;top:45px;width:1.600px;height:6.500px;background:#454545"></div>
<div class="abs" style="left:693.5px;top:45px;width:1.600px;height:6.500px;background:#454545"></div>
<div class="abs" style="left:727.5px;top:45px;width:1.600px;height:6.500px;background:#454545"></div>
<div class="abs" style="left:761.5px;top:45px;width:1.600px;height:6.500px;background:#454545"></div>
<div class="abs" style="left:795.5px;top:45px;width:1.600px;height:6.500px;background:#454545"></div>
<div class="abs" style="left:829.5px;top:45px;width:1.600px;height:6.500px;background:#454545"></div>
<div class="abs" style="left:863.5px;top:45px;width:1.600px;height:6.500px;background:#454545"></div>
<div class="abs" style="left:897.6px;top:45px;width:1.400px;height:13.500px;background:#5e5e5e"></div>
<div class="t" style="left:903.1px;top:45.5px;font-size:13.500px;color:#656565">00:04</div>
<div class="abs" style="left:965.5px;top:45px;width:1.600px;height:6.500px;background:#454545"></div>
<div class="abs" style="left:999.5px;top:45px;width:1.600px;height:6.500px;background:#454545"></div>
<div class="abs" style="left:1033.5px;top:45px;width:1.600px;height:6.500px;background:#454545"></div>
<div class="abs" style="left:1067.5px;top:45px;width:1.600px;height:6.500px;background:#454545"></div>
<div class="abs" style="left:1101.5px;top:45px;width:1.600px;height:6.500px;background:#454545"></div>
<div class="abs" style="left:1135.5px;top:45px;width:1.600px;height:6.500px;background:#454545"></div>
<div class="abs" style="left:1169.5px;top:45px;width:1.600px;height:6.500px;background:#454545"></div>
<div class="abs" style="left:1203.5px;top:45px;width:1.600px;height:6.500px;background:#454545"></div>
<div class="abs" style="left:1237.6px;top:45px;width:1.400px;height:13.500px;background:#5e5e5e"></div>
<div class="t" style="left:1243.1px;top:45.5px;font-size:13.500px;color:#656565">00:06</div>
<div class="abs" style="left:1305.5px;top:45px;width:1.600px;height:6.500px;background:#454545"></div>
<div class="abs" style="left:1339.5px;top:45px;width:1.600px;height:6.500px;background:#454545"></div>
<div class="abs" style="left:1373.5px;top:45px;width:1.600px;height:6.500px;background:#454545"></div>
<div class="abs" style="left:1407.5px;top:45px;width:1.600px;height:6.500px;background:#454545"></div>
<div class="abs" style="left:1441.5px;top:45px;width:1.600px;height:6.500px;background:#454545"></div>
<div class="abs" style="left:1475.5px;top:45px;width:1.600px;height:6.500px;background:#454545"></div>
<div class="abs" style="left:1509.5px;top:45px;width:1.600px;height:6.500px;background:#454545"></div>
<div class="abs" style="left:1543.5px;top:45px;width:1.600px;height:6.500px;background:#454545"></div>
<div class="abs" style="left:1577.6px;top:45px;width:1.400px;height:13.500px;background:#5e5e5e"></div>
<div class="t" style="left:1583.1px;top:45.5px;font-size:13.500px;color:#656565">00:08</div>
<div class="abs" style="left:1645.5px;top:45px;width:1.600px;height:6.500px;background:#454545"></div>
<div class="abs" style="left:1679.5px;top:45px;width:1.600px;height:6.500px;background:#454545"></div>
<div class="abs" style="left:1713.5px;top:45px;width:1.600px;height:6.500px;background:#454545"></div>
<div class="abs" style="left:1747.5px;top:45px;width:1.600px;height:6.500px;background:#454545"></div>
<div class="abs" style="left:1781.5px;top:45px;width:1.600px;height:6.500px;background:#454545"></div>
<div class="abs" style="left:1815.5px;top:45px;width:1.600px;height:6.500px;background:#454545"></div>
<div class="abs" style="left:1849.5px;top:45px;width:1.600px;height:6.500px;background:#454545"></div>
<div class="abs" style="left:1883.5px;top:45px;width:1.600px;height:6.500px;background:#454545"></div>
<div class="abs" style="left:0;top:79.5px;width:1891px;height:30.5px;background:#2b2b2b"></div>
<div class="abs" style="left:0;top:115.3px;width:1891px;height:29.2px;background:#2b2b2b"></div>
<div class="abs" style="left:0;top:149.7px;width:1891px;height:95.1px;background:#2b2b2b"></div>
<div class="abs" style="left:0;top:250.2px;width:1891px;height:61.8px;background:#2b2b2b"></div>
<div class="abs" style="left:218px;top:115.3px;width:1673px;height:29.200px;background:#323232"></div>
<div class="abs" style="left:154.3px;top:75px;width:1px;height:250px;background:#161616"></div>
<div class="abs" style="left:155.3px;top:75px;width:62.69999999999999px;height:250px;background:#272727"></div>
<div class="t" style="left:8.5px;top:84.5px;font-size:18.500px;font-family:'Liberation Serif',serif;color:#787878;letter-spacing:0.8px">TI</div>
<svg style="left:42.3px;top:88.7px" width="11" height="12" viewBox="0 0 11 12"><rect x="1" y="5.700" width="9" height="5.200" rx="0.800" class="ic" style="stroke:#f0f0f0;stroke-width:1.900"/><path d="M3 5.500V3.300A2.400 2.400 0 0 1 7.600 2.600" class="ic" style="stroke:#f0f0f0;stroke-width:1.700"/></svg>
<svg style="left:71px;top:90px" width="14" height="10" viewBox="0 0 14 10"><path d="M0.800 5C2.500 2 4.700 0.900 7 0.900S11.500 2 13.200 5C11.500 8 9.300 9.100 7 9.100S2.500 8 0.800 5Z" class="ic" style="stroke:#f0f0f0;stroke-width:1.400"/><circle cx="7" cy="5" r="2" class="ic" style="stroke:#f0f0f0;stroke-width:1.400"/></svg>
<div class="t" style="left:8.5px;top:119.5px;font-size:18.500px;font-family:'Liberation Serif',serif;color:#787878;letter-spacing:0.8px">TI</div>
<svg style="left:42.3px;top:123.7px" width="11" height="12" viewBox="0 0 11 12"><rect x="1" y="5.700" width="9" height="5.200" rx="0.800" class="ic" style="stroke:#f0f0f0;stroke-width:1.900"/><path d="M3 5.500V3.300A2.400 2.400 0 0 1 7.600 2.600" class="ic" style="stroke:#f0f0f0;stroke-width:1.700"/></svg>
<svg style="left:71px;top:125px" width="14" height="10" viewBox="0 0 14 10"><path d="M0.800 5C2.500 2 4.700 0.900 7 0.900S11.500 2 13.200 5C11.500 8 9.300 9.100 7 9.100S2.500 8 0.800 5Z" class="ic" style="stroke:#f0f0f0;stroke-width:1.400"/><circle cx="7" cy="5" r="2" class="ic" style="stroke:#f0f0f0;stroke-width:1.400"/></svg>
<svg style="left:10px;top:190.5px" width="16" height="13" viewBox="0 0 16 13"><rect x="0.700" y="0.700" width="14.600" height="11.600" rx="0.800" class="ic" style="stroke:#6e6e6e;stroke-width:1.300"/><path d="M6.300 4V9L10.300 6.500Z" fill="#6e6e6e"/></svg>
<svg style="left:42.3px;top:190.7px" width="11" height="12" viewBox="0 0 11 12"><rect x="1" y="5.700" width="9" height="5.200" rx="0.800" class="ic" style="stroke:#f0f0f0;stroke-width:1.900"/><path d="M3 5.500V3.300A2.400 2.400 0 0 1 7.600 2.600" class="ic" style="stroke:#f0f0f0;stroke-width:1.700"/></svg>
<svg style="left:71px;top:192px" width="14" height="10" viewBox="0 0 14 10"><path d="M0.800 5C2.500 2 4.700 0.900 7 0.900S11.500 2 13.200 5C11.500 8 9.300 9.100 7 9.100S2.500 8 0.800 5Z" class="ic" style="stroke:#f0f0f0;stroke-width:1.400"/><circle cx="7" cy="5" r="2" class="ic" style="stroke:#f0f0f0;stroke-width:1.400"/></svg>
<svg style="left:100.5px;top:191px" width="15" height="12" viewBox="0 0 15 12"><path d="M1 4H3.500L7 1.200V10.800L3.500 8H1Z" class="ic" style="stroke:#f0f0f0;stroke-width:1.400"/><path d="M9.800 3.500V8.500M12.300 2.200C13.800 4.500 13.800 7.500 12.300 9.800" class="ic" style="stroke:#f0f0f0;stroke-width:1.400"/></svg>
<svg style="left:131.5px;top:195.5px" width="12" height="3" viewBox="0 0 12 3"><circle cx="1.500" cy="1.500" r="1.300" fill="#e0e0e0"/><circle cx="6" cy="1.500" r="1.300" fill="#e0e0e0"/><circle cx="10.500" cy="1.500" r="1.300" fill="#e0e0e0"/></svg>
<svg style="left:9.5px;top:272.5px" width="17" height="17" viewBox="0 0 17 17"><path d="M11.500 1.800A7.500 7.500 0 1 0 15.200 5.500" class="ic" style="stroke:#6e6e6e;stroke-width:1.300"/><circle cx="8.200" cy="9.200" r="2" class="ic" style="stroke:#6e6e6e;stroke-width:1.300"/><path d="M10.200 9.200V1.200C11 2.200 12 2.700 13.200 2.800" class="ic" style="stroke:#6e6e6e;stroke-width:1.300"/></svg>
<svg style="left:42.3px;top:274.7px" width="11" height="12" viewBox="0 0 11 12"><rect x="1" y="5.700" width="9" height="5.200" rx="0.800" class="ic" style="stroke:#f0f0f0;stroke-width:1.900"/><path d="M3 5.500V3.300A2.400 2.400 0 0 1 7.600 2.600" class="ic" style="stroke:#f0f0f0;stroke-width:1.700"/></svg>
<svg style="left:100.5px;top:275px" width="15" height="12" viewBox="0 0 15 12"><path d="M1 4H3.500L7 1.200V10.800L3.500 8H1Z" class="ic" style="stroke:#f0f0f0;stroke-width:1.400"/><path d="M9.800 3.500V8.500M12.300 2.200C13.800 4.500 13.800 7.500 12.300 9.800" class="ic" style="stroke:#f0f0f0;stroke-width:1.400"/></svg>
<svg style="left:131.5px;top:279.5px" width="12" height="3" viewBox="0 0 12 3"><circle cx="1.500" cy="1.500" r="1.300" fill="#e0e0e0"/><circle cx="6" cy="1.500" r="1.300" fill="#e0e0e0"/><circle cx="10.500" cy="1.500" r="1.300" fill="#e0e0e0"/></svg>
<div class="abs" style="left:160px;top:173px;width:48px;height:48px;background:#3b3b3b;border:1px dashed #4c4c4c;border-radius:6px"></div>
<svg style="left:177px;top:182px" width="14" height="15" viewBox="0 0 14 15"><path d="M2.500 9.800L3.200 7L8.800 1.400A1 1 0 0 1 10.200 1.400L11.200 2.400A1 1 0 0 1 11.200 3.800L5.600 9.400Z" class="ic" style="stroke:#e8e8e8;stroke-width:1.300"/><path d="M1.200 13.800H12.800" class="ic" style="stroke:#e8e8e8;stroke-width:1.400"/></svg>
<div class="t c" style="left:184px;top:200.5px;font-size:12.800px;color:#e6e6e6">Cover</div>
<div class="clip" style="left:218px;top:82px;width:480px"><div class="tag"></div><svg style="left:6px;top:8px" width="15" height="9" viewBox="0 0 15 9"><path d="M0.800 8.600L4 0.900L7.200 8.600M2 6H6" fill="none" stroke="#fff" stroke-width="1.900" stroke-linejoin="round"/><path d="M8.600 1.500H14.600M9.400 4.600H14.600M9.400 7.700H14.600" stroke="#fff" stroke-width="1.600"/></svg><div class="nm">真让人惊讶，妈妈</div></div>
<div class="clip" style="left:705px;top:82px;width:208.5px"><div class="tag"></div><svg style="left:6px;top:8px" width="15" height="9" viewBox="0 0 15 9"><path d="M0.800 8.600L4 0.900L7.200 8.600M2 6H6" fill="none" stroke="#fff" stroke-width="1.900" stroke-linejoin="round"/><path d="M8.600 1.500H14.600M9.400 4.600H14.600M9.400 7.700H14.600" stroke="#fff" stroke-width="1.600"/></svg><div class="nm">我只是在编辑这个视频</div></div>
<div class="clip" style="left:218px;top:117.2px;width:480px"><div class="tag"></div><svg style="left:6px;top:8px" width="15" height="9" viewBox="0 0 15 9"><path d="M0.800 8.600L4 0.900L7.200 8.600M2 6H6" fill="none" stroke="#fff" stroke-width="1.900" stroke-linejoin="round"/><path d="M8.600 1.500H14.600M9.400 4.600H14.600M9.400 7.700H14.600" stroke="#fff" stroke-width="1.600"/></svg><div class="nm">It is all with</div></div>
<div class="abs" style="left:701.1px;top:117.5px;width:211.1px;height:24.800px;background:#fff;border-radius:4px"></div>
<div class="abs" style="left:702.8px;top:124.2px;width:0;height:11px;border-left:1px dotted #9a9a9a"></div>
<div class="abs" style="left:909.7px;top:124.2px;width:0;height:11px;border-left:1px dotted #9a9a9a"></div>
<div class="clip" style="left:705.1px;top:118.5px;width:203.1px;height:22.800px;border-radius:0"><div class="tag" style="top:2.500px"></div><svg style="left:6px;top:6.700px" width="15" height="9" viewBox="0 0 15 9"><path d="M0.800 8.600L4 0.900L7.200 8.600M2 6H6" fill="none" stroke="#fff" stroke-width="1.900" stroke-linejoin="round"/><path d="M8.600 1.500H14.600M9.400 4.600H14.600M9.400 7.700H14.600" stroke="#fff" stroke-width="1.600"/></svg><div class="nm" style="top:2.500px">the grace of GOD</div></div>
<div class="abs" style="left:706px;top:144px;width:2px;height:7.500px;background:#46302b"></div>
<div class="abs" style="left:218px;top:152px;width:1081px;height:90px;background:#00505a;border-radius:5px;overflow:hidden">
<svg style="left:1px;top:23px" width="1079.500" height="47" viewBox="0 0 1079.500 47" overflow="hidden">
<svg x="0.0" y="0" width="63.400000000000006" height="47" viewBox="0 0 63.400 47" overflow="hidden"><use href="#man" x="-8.900" y="0" width="83.500" height="47"/></svg>
<svg x="62.7" y="0" width="63.400000000000006" height="47" viewBox="0 0 63.400 47" overflow="hidden"><use href="#man" x="-8.900" y="0" width="83.500" height="47"/></svg>
<svg x="125.4" y="0" width="63.400000000000006" height="47" viewBox="0 0 63.400 47" overflow="hidden"><use href="#man" x="-8.900" y="0" width="83.500" height="47"/></svg>
<svg x="188.1" y="0" width="63.400000000000006" height="47" viewBox="0 0 63.400 47" overflow="hidden"><use href="#man" x="-8.900" y="0" width="83.500" height="47"/></svg>
<svg x="250.8" y="0" width="63.400000000000006" height="47" viewBox="0 0 63.400 47" overflow="hidden"><use href="#man" x="-8.900" y="0" width="83.500" height="47"/></svg>
<svg x="313.5" y="0" width="63.400000000000006" height="47" viewBox="0 0 63.400 47" overflow="hidden"><use href="#man" x="-8.900" y="0" width="83.500" height="47"/></svg>
<svg x="376.2" y="0" width="63.400000000000006" height="47" viewBox="0 0 63.400 47" overflow="hidden"><use href="#man" x="-8.900" y="0" width="83.500" height="47"/></svg>
<svg x="438.9" y="0" width="63.400000000000006" height="47" viewBox="0 0 63.400 47" overflow="hidden"><use href="#man" x="-8.900" y="0" width="83.500" height="47"/></svg>
<svg x="501.6" y="0" width="63.400000000000006" height="47" viewBox="0 0 63.400 47" overflow="hidden"><use href="#man" x="-8.900" y="0" width="83.500" height="47"/></svg>
<svg x="564.3" y="0" width="63.400000000000006" height="47" viewBox="0 0 63.400 47" overflow="hidden"><use href="#man" x="-8.900" y="0" width="83.500" height="47"/></svg>
<svg x="627.0" y="0" width="63.400000000000006" height="47" viewBox="0 0 63.400 47" overflow="hidden"><use href="#man" x="-8.900" y="0" width="83.500" height="47"/></svg>
<svg x="689.7" y="0" width="63.400000000000006" height="47" viewBox="0 0 63.400 47" overflow="hidden"><use href="#man" x="-8.900" y="0" width="83.500" height="47"/></svg>
<svg x="752.4" y="0" width="63.400000000000006" height="47" viewBox="0 0 63.400 47" overflow="hidden"><use href="#man" x="-8.900" y="0" width="83.500" height="47"/></svg>
<svg x="815.1" y="0" width="63.400000000000006" height="47" viewBox="0 0 63.400 47" overflow="hidden"><use href="#man" x="-8.900" y="0" width="83.500" height="47"/></svg>
<svg x="877.8" y="0" width="63.400000000000006" height="47" viewBox="0 0 63.400 47" overflow="hidden"><use href="#man" x="-8.900" y="0" width="83.500" height="47"/></svg>
<svg x="940.5" y="0" width="63.400000000000006" height="47" viewBox="0 0 63.400 47" overflow="hidden"><use href="#man" x="-8.900" y="0" width="83.500" height="47"/></svg>
<svg x="1003.2" y="0" width="63.400000000000006" height="47" viewBox="0 0 63.400 47" overflow="hidden"><use href="#man" x="-8.900" y="0" width="83.500" height="47"/></svg>
<svg x="1065.9" y="0" width="63.400000000000006" height="47" viewBox="0 0 63.400 47" overflow="hidden"><use href="#man" x="-8.900" y="0" width="83.500" height="47"/></svg>
</svg>
<div class="abs" style="left:5px;top:2.800px;height:17px;padding:0 2.500px;background:#0f5c66;border-radius:3px;font-size:12.950px;line-height:17px;color:#d8ecee;white-space:nowrap">Young handsome chinese man pointing up</div>
<div class="abs" style="left:257.500px;top:2.800px;height:17px;padding:0 3px;background:#0f5c66;border-radius:3px;font-size:12.950px;line-height:17px;color:#d8ecee;white-space:nowrap">00:00:06:11</div>
</div>
<div class="abs" style="left:218px;top:252px;width:695.500px;height:57.500px;background:#003d55;border-radius:5px;overflow:hidden">
<div class="abs" style="left:5px;top:3px;height:17px;padding:0 5px 0 1.500px;background:#0c4a62;border-radius:3px;font-size:12.700px;line-height:17px;color:#d8e8ee;white-space:nowrap">Voiceover1</div>
<svg style="left:0;top:0" width="696" height="58" viewBox="0 0 696 58"><path d="M5.00 53.0V58M7.44 41.9V58M9.87 41.3V58M12.31 42.0V58M14.75 41.5V58M17.19 41.7V58M19.62 42.0V58M22.06 39.7V58M24.50 39.3V58M26.93 37.9V58M29.37 38.3V58M31.81 38.3V58M34.24 35.0V58M36.68 33.3V58M39.12 34.5V58M41.56 36.1V58M43.99 37.6V58M46.43 36.7V58M48.87 33.2V58M51.30 27.8V58M53.74 26.1V58M56.18 28.8V58M58.61 29.4V58M61.05 31.1V58M63.49 29.2V58M65.93 30.1V58M68.36 26.2V58M70.80 22.8V58M73.24 22.8V58M75.67 22.8V58M78.11 22.8V58M80.55 22.8V58M82.98 23.3V58M85.42 27.2V58M87.86 33.5V58M90.30 36.7V58M92.73 39.6V58M95.17 34.0V58M97.61 23.3V58M100.04 23.3V58M102.48 23.3V58M104.92 23.3V58M107.35 23.3V58M109.79 23.3V58M112.23 27.8V58M114.67 25.5V58M117.10 23.4V58M119.54 22.8V58M121.98 22.8V58M124.41 24.2V58M126.85 29.5V58M129.29 29.0V58M131.72 31.5V58M134.16 32.3V58M136.60 30.7V58M139.04 27.9V58M141.47 25.2V58M143.91 25.4V58M146.35 24.7V58M148.78 23.3V58M151.22 23.3V58M153.66 23.3V58M156.09 23.3V58M158.53 23.3V58M160.97 23.3V58M163.41 23.3V58M165.84 23.3V58M168.28 23.3V58M170.72 23.3V58M173.15 23.3V58M175.59 23.3V58M178.03 23.3V58M180.46 23.3V58M182.90 23.7V58M185.34 30.2V58M187.78 38.5V58M190.21 38.9V58M192.65 33.9V58M195.09 34.0V58M197.52 34.1V58M199.96 32.3V58M202.40 29.8V58M204.83 29.0V58M207.27 28.5V58M209.71 29.1V58M212.15 27.6V58M214.58 28.8V58M217.02 29.4V58M219.46 29.0V58M221.89 32.2V58M224.33 34.9V58M226.77 35.3V58M229.20 33.8V58M231.64 33.8V58M234.08 31.1V58M236.52 27.5V58M238.95 28.5V58M241.39 27.9V58M243.83 28.6V58M246.26 27.6V58M248.70 27.9V58M251.14 28.6V58M253.57 30.1V58M256.01 30.5V58M258.45 30.0V58M260.89 31.8V58M263.32 32.1V58M265.76 32.7V58M268.20 32.9V58M270.63 31.9V58M273.07 34.0V58M275.51 33.0V58M277.94 35.3V58M280.38 34.8V58M282.82 33.7V58M285.26 37.9V58M287.69 37.2V58M290.13 35.1V58M292.57 35.4V58M295.00 35.4V58M297.44 32.9V58M299.88 30.6V58M302.31 30.2V58M304.75 25.4V58M307.19 28.2V58M309.63 29.6V58M312.06 33.6V58M314.50 39.8V58M316.94 41.0V58M319.37 40.9V58M321.81 36.9V58M324.25 34.3V58M326.68 33.6V58M329.12 32.3V58M331.56 30.5V58M334.00 27.4V58M336.43 26.8V58M338.87 28.5V58M341.31 29.0V58M343.74 29.3V58M346.18 29.8V58M348.62 30.3V58M351.05 30.5V58M353.49 30.6V58M355.93 29.0V58M358.37 28.1V58M360.80 27.5V58M363.24 27.7V58M365.68 29.3V58M368.11 29.1V58M370.55 30.3V58M372.99 28.2V58M375.42 31.0V58M377.86 31.3V58M380.30 31.0V58M382.74 31.6V58M385.17 31.1V58M387.61 32.3V58M390.05 32.2V58M392.48 31.2V58M394.92 31.1V58M397.36 29.6V58M399.79 30.7V58M402.23 27.1V58M404.67 28.7V58M407.11 31.3V58M409.54 31.3V58M411.98 30.4V58M414.42 28.3V58M416.85 27.3V58M419.29 25.1V58M421.73 25.6V58M424.16 28.9V58M426.60 29.8V58M429.04 32.5V58M431.48 33.3V58M433.91 32.4V58M436.35 33.0V58M438.79 30.7V58M441.22 33.9V58M443.66 34.7V58M446.10 30.8V58M448.53 32.9V58M450.97 34.8V58M453.41 33.3V58M455.85 35.6V58M458.28 33.4V58M460.72 31.4V58M463.16 31.9V58M465.59 32.6V58M468.03 34.6V58M470.47 34.1V58M472.90 35.2V58M475.34 32.9V58M477.78 34.3V58M480.22 33.5V58M482.65 35.8V58M485.09 36.6V58M487.53 34.3V58M489.96 33.7V58M492.40 34.5V58M494.84 34.9V58M497.27 35.0V58M499.71 35.5V58M502.15 38.0V58M504.59 36.9V58M507.02 37.8V58M509.46 39.4V58M511.90 39.6V58M514.33 38.7V58M516.77 39.0V58M519.21 37.3V58M521.64 36.3V58M524.08 38.7V58M526.52 36.7V58M528.96 36.7V58M531.39 37.0V58M533.83 39.6V58M536.27 40.2V58M538.70 40.2V58M541.14 40.3V58M543.58 40.3V58M546.01 38.5V58M548.45 37.2V58M550.89 37.5V58M553.33 39.1V58M555.76 38.3V58M558.20 37.7V58M560.64 40.8V58M563.07 38.3V58M565.51 37.2V58M567.95 37.8V58M570.38 37.9V58M572.82 39.2V58M575.26 40.5V58M577.70 37.9V58M580.13 40.0V58M582.57 38.0V58M585.01 37.3V58M587.44 40.0V58M589.88 40.0V58M592.32 37.7V58M594.75 38.7V58M597.19 41.2V58M599.63 41.5V58M602.07 41.5V58M604.50 38.2V58M606.94 38.7V58M609.38 41.7V58M611.81 38.8V58M614.25 38.2V58M616.69 39.7V58M619.12 41.1V58M621.56 40.3V58M624.00 42.1V58M626.44 42.6V58M628.87 38.3V58M631.31 39.7V58M633.75 40.3V58M636.18 38.4V58M638.62 40.6V58M641.06 38.7V58M643.49 38.8V58M645.93 41.5V58M648.37 41.3V58M650.81 41.1V58M653.24 41.3V58M655.68 39.8V58M658.12 41.2V58M660.55 40.5V58M662.99 41.7V58M665.43 38.3V58M667.86 40.7V58M670.30 40.2V58M672.74 39.8V58M675.18 38.7V58M677.61 41.1V58M680.05 39.2V58M682.49 41.3V58M684.92 41.4V58M687.36 41.8V58M689.80 44.3V58M692.23 42.7V58" stroke="#208fbf" stroke-width="1.050" fill="none"/><path d="M70.80 22.8v1.8M73.24 22.8v1.8M75.67 22.8v1.8M78.11 22.8v1.8M80.55 22.8v1.8M82.98 23.3v1.8M97.61 23.3v1.8M100.04 23.3v1.8M102.48 23.3v1.8M104.92 23.3v1.8M107.35 23.3v1.8M109.79 23.3v1.8M117.10 23.4v1.8M119.54 22.8v1.8M121.98 22.8v1.8M148.78 23.3v1.8M151.22 23.3v1.8M153.66 23.3v1.8M156.09 23.3v1.8M158.53 23.3v1.8M160.97 23.3v1.8M163.41 23.3v1.8M165.84 23.3v1.8M168.28 23.3v1.8M170.72 23.3v1.8M173.15 23.3v1.8M175.59 23.3v1.8M178.03 23.3v1.8M180.46 23.3v1.8" stroke="#f08a3c" stroke-width="1.150" fill="none"/><path d="M2 42.200H693" stroke="#8fb4c4" stroke-opacity="0.55" stroke-width="1"/></svg>
</div>
<div class="abs" style="left:318.8px;top:54px;width:1.800px;height:254px;background:rgba(255,255,255,0.700)"></div>
<svg style="left:313.5px;top:40.5px" width="13" height="17" viewBox="0 0 13 17"><path d="M1.200 1H11.800V10.500A5.300 5.300 0 0 1 1.200 10.500Z" fill="#2a2a2a" stroke="#fff" stroke-width="2.300" stroke-linejoin="round"/></svg>
<div class="abs" style="left:158px;top:315px;width:1730px;height:7px;background:#3d3d3d;border-radius:4px"></div>
</div>
</body>
</html>
